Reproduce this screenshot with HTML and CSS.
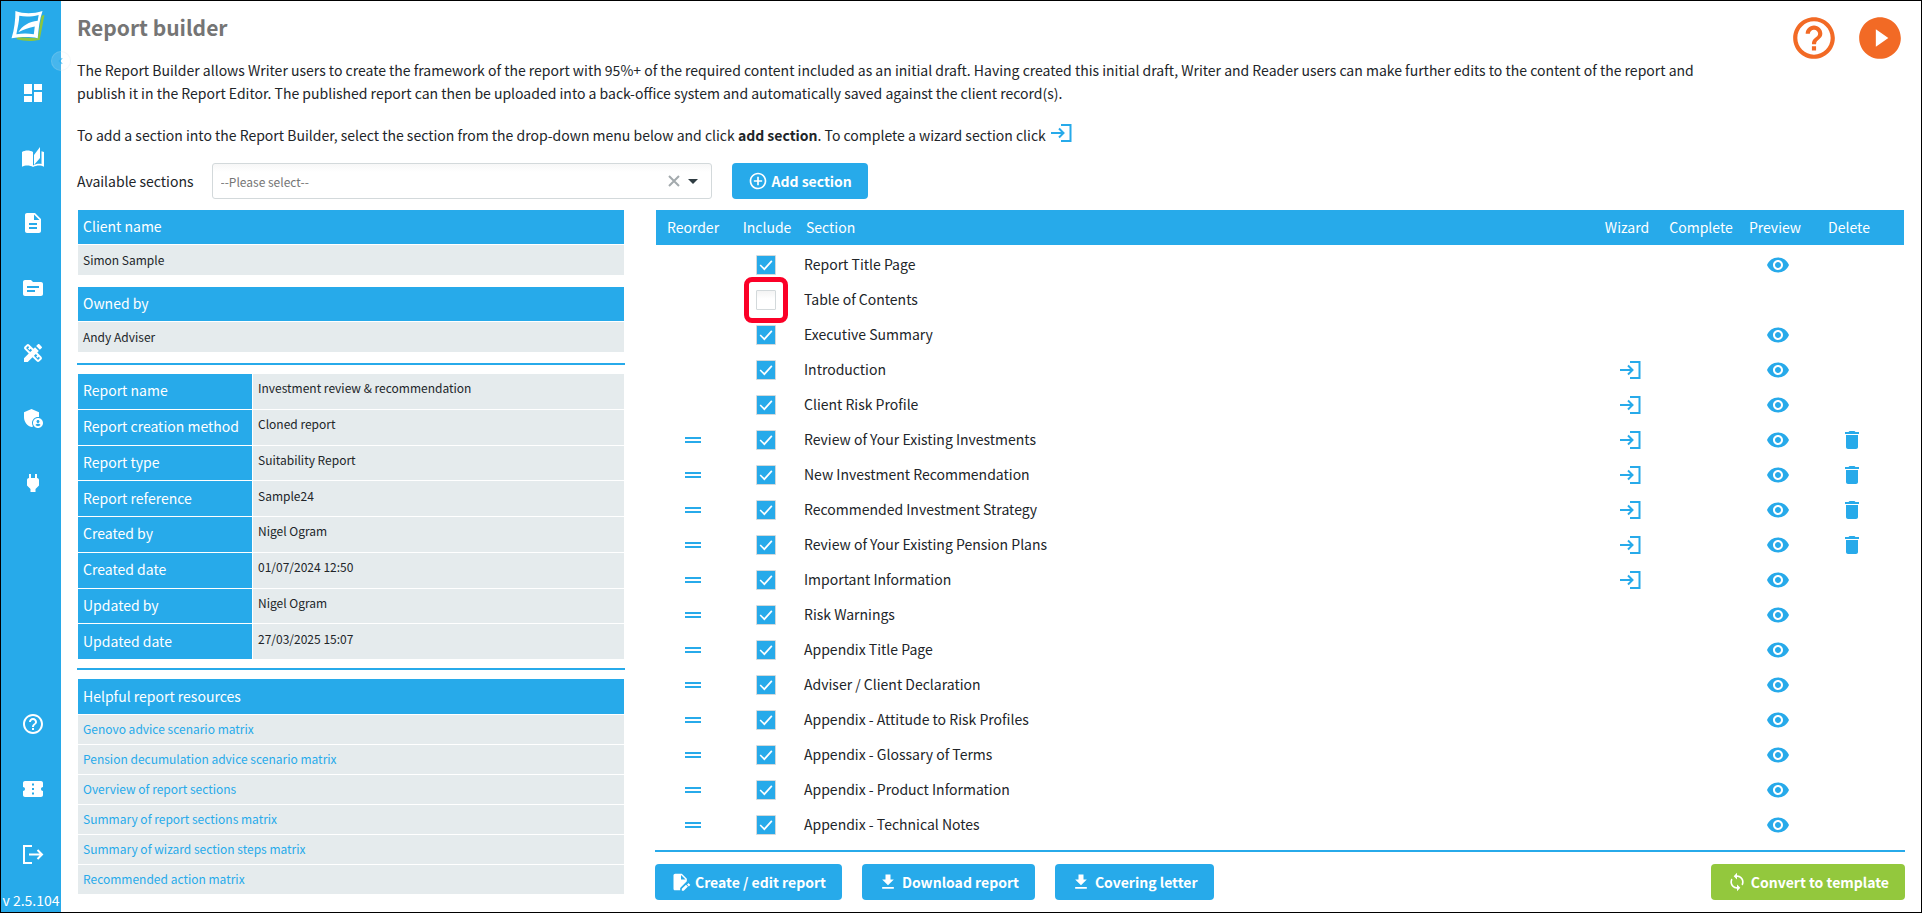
FILE: index.html
```html
<!DOCTYPE html>
<html lang="en">
<head>
    <meta charset="UTF-8">
    <meta name="viewport" content="width=device-width, initial-scale=1.0">
    <title>Report builder</title>
    <link rel="stylesheet" href="styles.css">
</head>
<body>
    <!-- Icon sprite -->
    <svg class="sprite" aria-hidden="true">
        <symbol id="i-dashboard" viewBox="0 0 24 24"><path d="M3 13h8V3H3v10zm0 8h8v-6H3v6zm10 0h8V11h-8v10zm0-18v6h8V3h-8z"/></symbol>
        <symbol id="i-book" viewBox="0 0 24 24"><path d="M1 6c3-2 8-2 11 0v15c-3-2-8-2-11-.2z"/><path d="M13 9l6-8v11l-6 7z"/><path d="M20.500 5.200L23 6v14.800c-3-1.800-7-1.800-11 .2v-1.500c2.500-1.500 5.500-2 8.500-1.500z"/></symbol>
        <symbol id="i-file" viewBox="0 0 24 24"><path d="M14 2H6c-1.100 0-2 .9-2 2v16c0 1.100.9 2 2 2h12c1.100 0 2-.9 2-2V8l-6-6zm2 16H8v-2h8v2zm0-4H8v-2h8v2zm-3-5V3.500L18.500 9H13z"/></symbol>
        <symbol id="i-folder" viewBox="0 0 24 24"><path d="M20 6h-8l-2-2H4c-1.100 0-2 .9-2 2v12c0 1.100.9 2 2 2h16c1.100 0 2-.9 2-2V8c0-1.100-.9-2-2-2zm-6 10H6v-2h8v2zm4-4H6v-2h12v2z"/></symbol>
        <symbol id="i-tools" viewBox="0 0 24 24"><path d="M16.240 11.510l1.570-1.570-3.750-3.750-1.570 1.570-4.140-4.130c-.78-.78-2.050-.78-2.830 0l-1.900 1.900c-.78.78-.78 2.050 0 2.830l4.130 4.130L3 17.250V21h3.750l4.760-4.760 4.130 4.130c.95.95 2.230.6 2.830 0l1.900-1.900c.78-.78.78-2.050 0-2.830l-4.130-4.130zm-7.060-.44L5.040 6.940l1.890-1.900L8.200 6.310 7.020 7.500l1.410 1.410 1.190-1.190 1.450 1.450-1.890 1.900zm7.880 7.890l-4.130-4.130 1.900-1.900 1.450 1.450-1.190 1.190 1.410 1.410 1.190-1.190 1.270 1.270-1.900 1.900zM20.710 7.040a.996.996 0 000-1.410l-2.340-2.340c-.47-.47-1.120-.29-1.410 0l-1.830 1.830 3.750 3.750 1.830-1.830z"/></symbol>
        <symbol id="i-shield" viewBox="0 0 24 24"><path d="M17 11c.34 0 .67.040 1 .09V6.270L10.500 3 3 6.270v4.910c0 4.540 3.200 8.790 7.500 9.820.55-.13 1.080-.32 1.600-.55-.69-.98-1.100-2.170-1.100-3.450 0-3.310 2.690-6 6-6z"/><path d="M17 12c-2.760 0-5 2.240-5 5s2.240 5 5 5 5-2.240 5-5-2.240-5-5-5zm0 2c.83 0 1.500.67 1.500 1.500S17.830 17 17 17s-1.500-.67-1.500-1.500S16.170 14 17 14zm0 6.200c-1 0-1.900-.5-2.500-1.200.1-.8 1.700-1.200 2.500-1.200s2.400.4 2.500 1.200c-.6.7-1.500 1.200-2.500 1.200z"/></symbol>
        <symbol id="i-plug" viewBox="0 0 24 24"><path d="M16 7V3h-2v4h-4V3H8v4h-.010C7 6.990 6 7.990 6 8.990v5.490L9.500 18v3h5v-3l3.500-3.510v-5.500c0-1-1-2-2-1.990z"/></symbol>
        <symbol id="i-help" viewBox="0 0 24 24"><path d="M11 18h2v-2h-2v2zm1-16C6.480 2 2 6.480 2 12s4.480 10 10 10 10-4.480 10-10S17.520 2 12 2zm0 18c-4.410 0-8-3.590-8-8s3.590-8 8-8 8 3.590 8 8-3.590 8-8 8zm0-14c-2.210 0-4 1.790-4 4h2c0-1.100.9-2 2-2s2 .9 2 2c0 2-3 1.750-3 5h2c0-2.250 3-2.500 3-5 0-2.210-1.790-4-4-4z"/></symbol>
        <symbol id="i-play" viewBox="0 0 24 24"><path d="M12 2C6.480 2 2 6.480 2 12s4.480 10 10 10 10-4.480 10-10S17.520 2 12 2zm-2 14.200V7.800l6 4.200z"/></symbol>
        <symbol id="i-ticket" viewBox="0 0 24 24"><path d="M22 10V6c0-1.110-.9-2-2-2H4c-1.100 0-1.990.89-1.990 2v4c1.100 0 1.990.9 1.990 2s-.89 2-2 2v4c0 1.100.9 2 2 2h16c1.100 0 2-.9 2-2v-4c-1.100 0-2-.9-2-2s.9-2 2-2zm-9 7.500h-2v-2h2v2zm0-4.500h-2v-2h2v2zm0-4.500h-2v-2h2v2z"/></symbol>
        <symbol id="i-logout" viewBox="0 0 24 24"><path d="M11 4H3v17h8M8 12.500h12.500M16.500 8l4.500 4.500-4.500 4.500" fill="none" stroke="currentColor" stroke-width="2"/></symbol>
        <symbol id="i-wizard" viewBox="0 0 24 24"><path d="M12 4h9.500v16H12M2 12h12M10 7.500l4.500 4.500-4.500 4.500" fill="none" stroke="currentColor" stroke-width="2"/></symbol>
        <symbol id="i-eye" viewBox="0 0 24 24"><path d="M12 4.500C7 4.500 2.730 7.610 1 12c1.730 4.390 6 7.500 11 7.500s9.270-3.110 11-7.500c-1.730-4.390-6-7.500-11-7.500zM12 17c-2.760 0-5-2.240-5-5s2.240-5 5-5 5 2.240 5 5-2.240 5-5 5zm0-8c-1.660 0-3 1.340-3 3s1.340 3 3 3 3-1.340 3-3-1.340-3-3-3z"/></symbol>
        <symbol id="i-bin" viewBox="0 0 24 24"><path d="M6 19c0 1.100.9 2 2 2h8c1.100 0 2-.9 2-2V7H6v12zM19 4h-3.500l-1-1h-5l-1 1H5v2h14V4z"/></symbol>
        <symbol id="i-drag" viewBox="0 0 24 24"><path d="M4 9h16v2H4zM4 13h16v2H4z"/></symbol>
        <symbol id="i-add" viewBox="0 0 24 24"><path d="M13 7h-2v4H7v2h4v4h2v-4h4v-2h-4V7zm-1-5C6.480 2 2 6.480 2 12s4.480 10 10 10 10-4.480 10-10S17.520 2 12 2zm0 18c-4.410 0-8-3.590-8-8s3.590-8 8-8 8 3.590 8 8-3.590 8-8 8z"/></symbol>
        <symbol id="i-edit" viewBox="0 0 24 24"><path d="M5 2C3.900 2 3 2.900 3 4v16c0 1.100.9 2 2 2h6v-2.800l8-8V8l-6-6H5zm7 7V3.500L17.500 9H12z"/><path d="M13 20.200V22.500h2.300l5-5-2.300-2.300zM22.800 15l-1.300-1.300c-.3-.3-.7-.3-1 0l-1.300 1.300 2.300 2.300 1.300-1.300c.3-.3.3-.7 0-1z"/></symbol>
        <symbol id="i-download" viewBox="0 0 24 24"><path d="M19 9h-4V3H9v6H5l7 7 7-7zM5 18v2h14v-2H5z"/></symbol>
        <symbol id="i-sync" viewBox="0 0 24 24"><path d="M12 4V1L8 5l4 4V6c3.310 0 6 2.690 6 6 0 1.010-.25 1.970-.7 2.800l1.460 1.460C19.540 15.030 20 13.570 20 12c0-4.420-3.580-8-8-8zm0 14c-3.310 0-6-2.690-6-6 0-1.010.25-1.970.7-2.800L5.240 7.740C4.460 8.970 4 10.430 4 12c0 4.420 3.580 8 8 8v3l4-4-4-4v3z"/></symbol>
        <symbol id="i-check" viewBox="0 0 24 24"><path d="M5 12l5 5L19 7" fill="none" stroke="currentColor" stroke-width="2"/></symbol>
    </svg>

    <div class="app">
        <nav class="sidebar">
            <a class="logo" href="#" aria-label="Home">
                <svg viewBox="0 0 34 32">
                    <path d="M31 5l3-1-5 26c-7 1-14 2-24-1l1-2 21 1z" fill="#8dc63f"/>
                    <path d="M4 0c9 3 18 3 28 0-3 8-4 18-5 28-10-2-18-1-27 0C3 19 4 9 4 0zm4 5C8 11 6 18 5 24c6-1 12-1 18 0l1-8c-6 1-11 3-17 6 4-7 11-11 20-12l1-6C21 6 14 6 8 5z" fill="#fff" fill-rule="evenodd"/>
                </svg>
            </a>
            <button class="collapse" type="button" aria-label="Collapse menu">
                <svg viewBox="0 0 24 24"><path d="M15 5l-7 7 7 7" fill="none" stroke="currentColor" stroke-width="3"/></svg>
            </button>
            <div class="nav-group">
                <a href="#" aria-label="Dashboard"><svg><use href="#i-dashboard"/></svg></a>
                <a href="#" aria-label="Library"><svg><use href="#i-book"/></svg></a>
                <a href="#" aria-label="Reports"><svg><use href="#i-file"/></svg></a>
                <a href="#" aria-label="Templates"><svg><use href="#i-folder"/></svg></a>
                <a href="#" aria-label="Tools"><svg><use href="#i-tools"/></svg></a>
                <a href="#" aria-label="Admin"><svg><use href="#i-shield"/></svg></a>
                <a href="#" aria-label="Integrations"><svg><use href="#i-plug"/></svg></a>
            </div>
            <div class="nav-group nav-bottom">
                <a href="#" aria-label="Help"><svg><use href="#i-help"/></svg></a>
                <a href="#" aria-label="Tickets"><svg><use href="#i-ticket"/></svg></a>
                <a href="#" aria-label="Log out"><svg><use href="#i-logout"/></svg></a>
            </div>
            <span class="version">v 2.5.104</span>
        </nav>

        <main class="content">
            <header class="page-header">
                <div class="intro">
                    <h1>Report builder</h1>
                    <p>The Report Builder allows Writer users to create the framework of the report with 95%+ of the required content included as an initial draft. Having created this initial draft, Writer and Reader users can make further edits to the content of the report and publish it in the Report Editor. The published report can then be uploaded into a back-office system and automatically saved against the client record(s).</p>
                    <p>To add a section into the Report Builder, select the section from the drop-down menu below and click <b>add section</b>. To complete a wizard section click <svg class="icon inline-icon"><use href="#i-wizard"/></svg></p>
                </div>
                <div class="help-links">
                    <a href="#" aria-label="Help"><svg><use href="#i-help"/></svg></a>
                    <a href="#" aria-label="Play video"><svg><use href="#i-play"/></svg></a>
                </div>
            </header>

            <form class="add-section">
                <label for="sections">Available sections</label>
                <div class="select-box">
                    <select id="sections" name="sections">
                        <option value="">--Please select--</option>
                    </select>
                    <button class="clear" type="button" aria-label="Clear">
                        <svg viewBox="0 0 12 12"><path d="M1 1l10 10M11 1L1 11" stroke="currentColor" stroke-width="2"/></svg>
                    </button>
                    <span class="caret"></span>
                </div>
                <button class="btn" type="button"><svg class="icon"><use href="#i-add"/></svg>Add section</button>
            </form>

            <div class="columns">
                <!-- Report details -->
                <aside class="details">
                    <div class="people">
                        <table class="info">
                            <tr><th>Client name</th></tr>
                            <tr><td>Simon Sample</td></tr>
                        </table>
                        <table class="info">
                            <tr><th>Owned by</th></tr>
                            <tr><td>Andy Adviser</td></tr>
                        </table>
                    </div>
                    <hr>
                    <table class="info report">
                        <tr><th>Report name</th><td>Investment review &amp; recommendation</td></tr>
                        <tr><th>Report creation method</th><td>Cloned report</td></tr>
                        <tr><th>Report type</th><td>Suitability Report</td></tr>
                        <tr><th>Report reference</th><td>Sample24</td></tr>
                        <tr><th>Created by</th><td>Nigel Ogram</td></tr>
                        <tr><th>Created date</th><td>01/07/2024 12:50</td></tr>
                        <tr><th>Updated by</th><td>Nigel Ogram</td></tr>
                        <tr><th>Updated date</th><td>27/03/2025 15:07</td></tr>
                    </table>
                    <hr>
                    <table class="info resources">
                        <tr><th>Helpful report resources</th></tr>
                        <tr><td><a href="#">Genovo advice scenario matrix</a></td></tr>
                        <tr><td><a href="#">Pension decumulation advice scenario matrix</a></td></tr>
                        <tr><td><a href="#">Overview of report sections</a></td></tr>
                        <tr><td><a href="#">Summary of report sections matrix</a></td></tr>
                        <tr><td><a href="#">Summary of wizard section steps matrix</a></td></tr>
                        <tr><td><a href="#">Recommended action matrix</a></td></tr>
                    </table>
                </aside>

                <!-- Report sections -->
                <section class="builder">
                    <table class="sections">
                        <thead>
                            <tr>
                                <th>Reorder</th>
                                <th>Include</th>
                                <th class="name">Section</th>
                                <th>Wizard</th>
                                <th>Complete</th>
                                <th>Preview</th>
                                <th>Delete</th>
                                <th class="gutter"></th>
                            </tr>
                        </thead>
                        <tbody id="sectionRows"></tbody>
                    </table>
                    <hr>
                    <div class="actions">
                        <button class="btn" type="button"><svg class="icon"><use href="#i-edit"/></svg>Create / edit report</button>
                        <button class="btn" type="button"><svg class="icon"><use href="#i-download"/></svg>Download report</button>
                        <button class="btn" type="button"><svg class="icon"><use href="#i-download"/></svg>Covering letter</button>
                        <button class="btn btn-green" type="button"><svg class="icon"><use href="#i-sync"/></svg>Convert to template</button>
                    </div>
                </section>
            </div>
        </main>
    </div>

    <script>
        // r = reorder, w = wizard, p = preview, d = delete
        const sections = [
            ['Report Title Page', 'p'],
            ['Table of Contents', ''],
            ['Executive Summary', 'p'],
            ['Introduction', 'wp'],
            ['Client Risk Profile', 'wp'],
            ['Review of Your Existing Investments', 'rwpd'],
            ['New Investment Recommendation', 'rwpd'],
            ['Recommended Investment Strategy', 'rwpd'],
            ['Review of Your Existing Pension Plans', 'rwpd'],
            ['Important Information', 'rwp'],
            ['Risk Warnings', 'rp'],
            ['Appendix Title Page', 'rp'],
            ['Adviser / Client Declaration', 'rp'],
            ['Appendix - Attitude to Risk Profiles', 'rp'],
            ['Appendix - Glossary of Terms', 'rp'],
            ['Appendix - Product Information', 'rp'],
            ['Appendix - Technical Notes', 'rp']
        ];

        function iconButton(show, icon, label) {
            if (!show) return '';
            return `<button class="icon-btn" type="button" aria-label="${label}"><svg class="icon"><use href="#i-${icon}"/></svg></button>`;
        }

        document.getElementById('sectionRows').innerHTML = sections.map(([name, flags], i) => {
            const unticked = name === 'Table of Contents';
            return `<tr>
                <td class="reorder">${iconButton(flags.includes('r'), 'drag', 'Reorder')}</td>
                <td class="include"><span class="tick${unticked ? ' highlight' : ''}"><input type="checkbox" id="section${i}"${unticked ? '' : ' checked'}><svg><use href="#i-check"/></svg></span></td>
                <td class="name"><label for="section${i}">${name}</label></td>
                <td>${iconButton(flags.includes('w'), 'wizard', 'Wizard')}</td>
                <td></td>
                <td>${iconButton(flags.includes('p'), 'eye', 'Preview')}</td>
                <td>${iconButton(flags.includes('d'), 'bin', 'Delete')}</td>
                <td></td>
            </tr>`;
        }).join('');
    </script>
</body>
</html>
```

FILE: styles.css
```css
* {
    box-sizing: border-box;
}

body {
    margin: 0;
    font-family: "Noto Sans CJK SC", "Noto Sans", sans-serif;
    font-size: 14px;
    line-height: 23px;
    color: #212529;
    background-color: #fff;
}

button,
select {
    font-family: inherit;
}

svg {
    fill: currentColor;
}

.sprite {
    display: none;
}

.app {
    display: flex;
    min-height: 100vh;
    border: 1px solid #000;
}

/* Sidebar */
.sidebar {
    position: relative;
    flex: 0 0 60px;
    width: 60px;
    display: flex;
    flex-direction: column;
    background-color: #27aaea;
    color: #fff;
}

.logo {
    height: 59px;
    padding: 10px 0 0 10px;
}

.logo svg {
    display: block;
    width: 34px;
    height: 31px;
}

.collapse {
    position: absolute;
    top: 50px;
    right: -10px;
    width: 20px;
    height: 20px;
    padding: 4px;
    border: 1px solid rgba(200, 220, 230, 0.2);
    border-radius: 50%;
    background-color: rgba(255, 255, 255, 0.15);
    color: rgba(39, 170, 234, 0.6);
}

.collapse svg {
    display: block;
    width: 10px;
    height: 10px;
}

.nav-group a {
    display: flex;
    align-items: center;
    justify-content: center;
    height: 65px;
    padding-left: 4px;
    color: #fff;
}

.nav-group svg {
    width: 24px;
    height: 24px;
}

.nav-bottom {
    margin-top: auto;
}

.version {
    padding-top: 2px;
    text-align: center;
    line-height: 24px;
    white-space: nowrap;
}

/* Header */
.content {
    flex: 1;
    min-width: 0;
    padding: 12px 16px 11px;
}

.page-header {
    display: flex;
    justify-content: space-between;
}

.intro {
    max-width: 1655px;
}

h1 {
    margin: 0 0 18px;
    font-size: 21px;
    line-height: 28px;
    color: #757575;
}

p {
    margin: 0 0 19px;
}

.intro p:last-child {
    margin-bottom: 16px;
}

.icon {
    width: 24px;
    height: 24px;
    flex: none;
}

.inline-icon {
    margin: -8px 0;
    vertical-align: 4px;
    color: #27aaea;
}

.help-links {
    display: flex;
    gap: 16px;
}

.help-links a {
    color: #f26a25;
}

.help-links svg {
    display: block;
    width: 50px;
    height: 50px;
}

/* Add section bar */
.add-section {
    display: flex;
    align-items: center;
    margin-bottom: 11px;
}

.select-box {
    position: relative;
    width: 500px;
    margin: 0 20px 0 18px;
}

.select-box select {
    display: block;
    appearance: none;
    width: 100%;
    height: 36px;
    padding: 0 60px 0 8px;
    border: 1px solid #d3d9db;
    border-radius: 3px;
    background: linear-gradient(#f7f7f7, #fff 8px);
    font-size: 12px;
    color: #757575;
}

.clear {
    position: absolute;
    top: 12px;
    right: 32px;
    padding: 0;
    border: 0;
    background: none;
    color: #a3aaad;
}

.clear svg {
    display: block;
    width: 12px;
    height: 12px;
}

.caret {
    position: absolute;
    top: 16px;
    right: 14px;
    border: 5px solid transparent;
    border-top-color: #2f3c42;
    border-bottom: 0;
    pointer-events: none;
}

.btn {
    display: flex;
    align-items: center;
    gap: 4px;
    height: 36px;
    padding: 0 16px;
    border: 0;
    border-radius: 4px;
    background-color: #27aaea;
    color: #fff;
    font-size: 14px;
    font-weight: bold;
    white-space: nowrap;
    cursor: pointer;
}

.btn .icon {
    width: 20px;
    height: 20px;
}

.btn-green {
    margin-left: auto;
    background-color: #93c83d;
}

/* Columns */
.columns {
    display: flex;
    gap: 30px;
}

.details {
    flex: 0 0 548px;
}

.people {
    display: grid;
    gap: 11px;
    margin-bottom: 10px;
}

.builder {
    flex: 1;
    min-width: 0;
}

hr {
    height: 2px;
    margin: 8px 0 9px;
    border: 0;
    background-color: #27aaea;
}

table {
    border-collapse: separate;
    border-spacing: 0;
}

.info {
    width: calc(100% - 2px);
    margin: 0 1px;
}

.info th {
    height: 35px;
    padding: 0 5px 1px;
    border-bottom: 1px solid #fff;
    background-color: #27aaea;
    color: #fff;
    font-weight: normal;
    text-align: left;
}

.info td {
    height: 31px;
    padding: 0 5px 1px;
    border-bottom: 1px solid #fff;
    background-color: #e5ebed;
    font-size: 12px;
    line-height: 18px;
}

.info.report {
    height: 286px;
}

.info.report th {
    width: 175px;
    height: auto;
    border-right: 1px solid #fff;
}

.info.report td {
    height: auto;
    padding-bottom: 6px;
}

.info.resources th {
    height: 36px;
}

.info.resources td {
    height: 30px;
}

.resources a {
    color: #27aaea;
    text-decoration: none;
}

.sections {
    width: calc(100% - 2px);
    margin: 0 1px;
    table-layout: fixed;
}

.sections th {
    width: 74px;
    height: 35px;
    padding: 0 0 1px;
    background-color: #27aaea;
    color: #fff;
    font-weight: normal;
    text-align: center;
}

.sections th.name {
    width: auto;
    padding-left: 2px;
    text-align: left;
}

.sections th.gutter {
    width: 18px;
}

.sections tbody::before {
    content: "";
    display: block;
    height: 2px;
}

.sections tbody td {
    height: 35px;
    padding: 0 0 0 6px;
    text-align: center;
}

.sections tbody td.name {
    padding: 0;
    text-align: left;
}

.sections tbody td.reorder {
    padding: 0;
}

.sections tbody td.include {
    padding: 0 2px 0 0;
}

.icon-btn {
    display: block;
    margin: 0 auto;
    padding: 0;
    border: 0;
    background: none;
    color: #27aaea;
    cursor: pointer;
}

.icon-btn .icon {
    display: block;
}

.tick {
    position: relative;
    display: block;
    width: 20px;
    height: 20px;
    margin: 0 auto;
}

.tick input {
    display: block;
    appearance: none;
    width: 20px;
    height: 20px;
    margin: 0;
    border: 1px solid #d3d9db;
    border-radius: 1px;
    background: linear-gradient(#f4f4f4, #fff 8px);
}

.tick input:checked {
    background: #27aaea;
}

.tick svg {
    display: none;
    position: absolute;
    inset: 0;
    width: 20px;
    height: 20px;
    color: #fff;
    pointer-events: none;
}

.tick input:checked + svg {
    display: block;
}

.highlight::after {
    content: "";
    position: absolute;
    inset: -13px -12px;
    border: 5px solid #fb0027;
    border-radius: 8px;
    pointer-events: none;
    z-index: 1;
}

.builder hr {
    margin: 8px 0 12px;
}

.actions {
    display: flex;
    gap: 20px;
}
```
